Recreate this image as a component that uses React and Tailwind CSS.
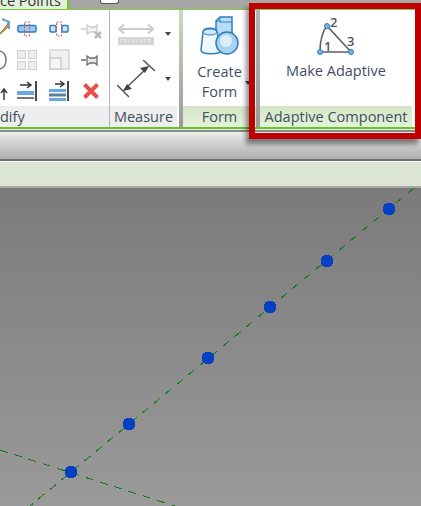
import React from "react";

function Label({ children, green, className = "" }) {
  return (
    <div className={`h-[21px] pt-[2px] flex items-center justify-center text-[14.5px] leading-none text-[#3f4f5f] ${green ? "bg-gradient-to-b from-[#d4e6c6] to-[#e4f3da]" : "bg-[#eeeeee]"} ${className}`}>
      {children}
    </div>
  );
}

function Caret({ className = "" }) {
  return <div className={`w-0 h-0 border-x-[3px] border-x-transparent border-t-[4px] border-t-[#444444] ${className}`} />;
}

function SplitIcon({ split }) {
  return (
    <svg width="20" height="20" viewBox="0 0 20 20" fill="none">
      {split ? (
        <>
          <rect x="1" y="6.5" width="6" height="6.5" rx="1" fill="#cfe3f5" stroke="#2a7fc4" strokeWidth="1.5" />
          <rect x="13" y="6.5" width="6" height="6.5" rx="1" fill="#cfe3f5" stroke="#2a7fc4" strokeWidth="1.5" />
        </>
      ) : (
        <rect x="1" y="6.5" width="18" height="6.5" rx="1.5" fill="#9cc8ec" stroke="#2a7fc4" strokeWidth="1.5" />
      )}
      <rect x="7.5" y="3" width="5" height="14" fill="none" stroke="#e0504a" strokeWidth="1" strokeDasharray="2 1.5" />
    </svg>
  );
}

function PinIcon({ faded, x }) {
  const c = faded ? "#cccccc" : "#6f6f6f";
  return (
    <svg width="22" height="22" viewBox="0 0 22 22" fill="none">
      <path d="M1 11h5M7 7l3 2h5l2-2v9l-2-2h-5l-3 2z" stroke={c} strokeWidth="1.3" fill={faded ? "#f2f2f2" : "#e8e8e8"} />
      {x && <path d="M15 14l6 6M21 14l-6 6" stroke="#b9b9b9" strokeWidth="2.5" />}
    </svg>
  );
}

function ModifyGrid() {
  const cell = "w-[32px] h-[31px] flex items-center justify-center";
  return (
    <div className="grid grid-cols-[11px_32px_32px_32px] pt-[3px] h-[96px] auto-rows-[31px]">
      <div className="h-[31px] flex items-center overflow-hidden">
        <svg width="11" height="22" viewBox="0 0 11 22" fill="none">
          <path d="M-2 18L7 7l2-4-1 6z" fill="#e8a830" stroke="#8b6f3a" />
          <path d="M2 1l7 3v7" stroke="#6f9fd0" strokeWidth="2" />
        </svg>
      </div>
      <div className={cell}><SplitIcon /></div>
      <div className={cell}><SplitIcon split /></div>
      <div className={cell}><PinIcon faded x /></div>

      <div className="h-[31px] flex items-center overflow-hidden">
        <svg width="11" height="22" viewBox="0 0 11 22" fill="none">
          <path d="M0 2c3 1 6 4 6 9s-3 8-6 9" stroke="#777777" strokeWidth="1.5" />
        </svg>
      </div>
      <div className={cell}>
        <div className="grid grid-cols-2 gap-[2px]">
          <div className="w-[9px] h-[9px] bg-[#ececec] border border-[#d2d2d2]" />
          <div className="w-[9px] h-[9px] bg-[#ececec] border border-[#d2d2d2]" />
          <div className="w-[9px] h-[9px] bg-[#ececec] border border-[#d2d2d2]" />
          <div className="w-[9px] h-[9px] bg-[#ececec] border border-[#d2d2d2]" />
        </div>
      </div>
      <div className={cell}>
        <svg width="21" height="21" viewBox="0 0 21 21" fill="none">
          <rect x="1" y="1" width="19" height="19" fill="#f0f0f0" stroke="#d4d4d4" strokeWidth="1.5" />
          <rect x="1" y="9" width="11" height="11" fill="#f6f6f6" stroke="#cccccc" strokeWidth="1.5" />
        </svg>
      </div>
      <div className={cell}><PinIcon /></div>

      <div className="h-[31px] flex items-center overflow-hidden">
        <svg width="11" height="22" viewBox="0 0 11 22" fill="none">
          <path d="M4 20V10M1 13l3-4 3 4" stroke="#3a3a3a" strokeWidth="1.5" />
        </svg>
      </div>
      <div className={cell}>
        <svg width="22" height="22" viewBox="0 0 22 22" fill="none">
          <path d="M4 5h10M11 2l4 3-4 3" stroke="#333333" strokeWidth="1.5" />
          <rect x="1" y="11" width="17" height="4" fill="#67a9e0" />
          <rect x="1" y="17" width="17" height="2" fill="#777777" />
          <path d="M20 1v20" stroke="#4a4a4a" strokeWidth="2" />
        </svg>
      </div>
      <div className={cell}>
        <svg width="22" height="22" viewBox="0 0 22 22" fill="none">
          <path d="M7 4h8M12 1l4 3-4 3" stroke="#333333" strokeWidth="1.5" />
          <rect x="1" y="9" width="17" height="3" fill="#67a9e0" />
          <rect x="1" y="13.5" width="17" height="3" fill="#5a7f9f" />
          <rect x="1" y="18" width="17" height="3" fill="#67a9e0" />
          <path d="M20 1v20" stroke="#4a4a4a" strokeWidth="2" />
        </svg>
      </div>
      <div className={cell}>
        <svg width="18" height="18" viewBox="0 0 18 18" fill="none">
          <path d="M2.5 2.5l13 13M15.5 2.5l-13 13" stroke="#e5504c" strokeWidth="4" />
        </svg>
      </div>
    </div>
  );
}

function MeasureIcons() {
  return (
    <div className="h-[96px] pt-[13px] flex flex-col items-start pl-[7px] gap-[13px]">
      <div className="flex items-start">
        <svg width="38" height="24" viewBox="0 0 38 24" fill="none">
          <path d="M2 6h34M7 1.5L2 6l5 4.5M31 1.5L36 6l-5 4.5" stroke="#cccccc" strokeWidth="2" />
          <rect x="1" y="14" width="36" height="8" fill="#d6d6d6" />
          <path d="M4 16v3M8 16v3M12 16v3M16 16v3M20 16v3M24 16v3M28 16v3M32 16v3" stroke="#efefef" />
        </svg>
        <Caret className="ml-[10px] mt-[9px]" />
      </div>
      <div className="flex items-start">
        <svg width="38" height="38" viewBox="0 0 38 38" fill="none">
          <path d="M26 0l12 11M0 25l12 12" stroke="#555555" strokeWidth="1.5" />
          <path d="M7 30L31 7" stroke="#555555" strokeWidth="1.5" />
          <path d="M32 6l-9 2 5 5zM6 31l9-2-5-5z" fill="#444444" />
        </svg>
        <Caret className="ml-[10px] mt-[17px]" />
      </div>
    </div>
  );
}

function FormIcon() {
  return (
    <svg width="39" height="39" viewBox="0 0 39 39" fill="none">
      <path d="M16 5l4-4h12v21H16z" fill="#b7dcf5" stroke="#2d7fc2" strokeWidth="1.5" />
      <path d="M20 1v5h12M16 5h4" stroke="#2d7fc2" strokeWidth="1" />
      <path d="M3 16c0-5 14-5 14 0l4 18c0 5-20 5-20 0z" fill="#f1f8fd" stroke="#2d7fc2" strokeWidth="1.5" />
      <ellipse cx="10" cy="16" rx="7" ry="3" fill="#cfe6f7" stroke="#2d7fc2" />
      <circle cx="27" cy="27" r="11" fill="#a7d3ee" stroke="#2d7fc2" strokeWidth="1.5" />
      <circle cx="26" cy="25" r="6" fill="#d8eefb" />
    </svg>
  );
}

function AdaptiveIcon() {
  return (
    <svg width="46" height="44" viewBox="0 0 46 44" fill="none">
      <path d="M14 12C9 18 7 27 7 38H38L14 12Z" stroke="#606060" strokeWidth="1.6" />
      <circle cx="14" cy="12" r="2.5" fill="#7fb4e2" stroke="#2d7fc2" />
      <circle cx="7" cy="38" r="2.5" fill="#7fb4e2" stroke="#2d7fc2" />
      <circle cx="38" cy="38" r="2.5" fill="#7fb4e2" stroke="#2d7fc2" />
      <text x="17" y="13" fontSize="13" fontWeight="600" fill="#555555" fontFamily="Open Sans, sans-serif">2</text>
      <text x="11" y="37" fontSize="13" fontWeight="600" fill="#555555" fontFamily="Open Sans, sans-serif">1</text>
      <text x="34" y="32" fontSize="13" fontWeight="600" fill="#555555" fontFamily="Open Sans, sans-serif">3</text>
    </svg>
  );
}

function Canvas() {
  const points = [
    [389, 209],
    [327, 261],
    [270, 307],
    [208, 358],
    [129, 424],
    [71, 472],
  ];
  return (
    <svg width="421" height="318" viewBox="0 188 421 318" className="block w-full h-[318px]" fill="none">
      <path d="M414 188L30 506" stroke="#0d7a12" strokeDasharray="8 7" shapeRendering="crispEdges" />
      <path d="M0 450L175 506" stroke="#0d7a12" strokeDasharray="8 7" shapeRendering="crispEdges" />
      {points.map(([x, y]) => (
        <circle key={x} cx={x} cy={y} r="6.5" fill="#0540c4" shapeRendering="crispEdges" />
      ))}
    </svg>
  );
}

export default function App() {
  return (
    <div className="relative w-[421px] h-[506px] overflow-hidden bg-white font-['Open_Sans','Noto_Sans',sans-serif]">
      {/* top tab strip */}
      <div className="h-[9px] bg-[#a6a6a6] flex overflow-hidden">
        <div className="w-[69px] h-[9px] bg-[#e2f1d8] border-r-2 border-[#6cc52a] overflow-hidden text-[14.5px] leading-none text-[#333333]">
          <div className="-mt-[6px] whitespace-nowrap text-right pr-[9px]">ce Points</div>
        </div>
        <div className="ml-[31px] w-[19px] h-[4px] bg-white border-b border-x border-[#555555] rounded-b-[3px]" />
      </div>

      {/* ribbon */}
      <div className="h-[120px] flex bg-white border-b-2 border-[#66c522] border-t border-t-[#7ccf3a]">
        <div className="w-[110px] flex flex-col border-r border-[#b5b5b5]">
          <ModifyGrid />
          <Label className="justify-start mt-auto">dify</Label>
        </div>
        <div className="w-[69px] flex flex-col">
          <MeasureIcons />
          <Label className="mt-auto mr-[2px]">Measure</Label>
        </div>
        <div className="w-[4px] bg-gradient-to-b from-[#c9dcbd] to-[#999999]" />
        <div className="w-[73px] flex flex-col relative">
          <div className="h-[96px] flex flex-col items-center pt-[6px]">
            <FormIcon />
            <div className="text-[14.5px] leading-[20px] text-[#3f4f5f] text-center mt-[7px]">Create<br />Form</div>
          </div>
          <Caret className="absolute left-[62px] top-[71px]" />
          <Label green className="mt-auto">Form</Label>
        </div>
        <div className="w-[4px] bg-gradient-to-b from-[#b5b5b5] to-[#9a9a9a]" />
        <div className="w-[152px] flex flex-col">
          <div className="h-[96px] flex flex-col items-center pt-[4px]">
            <AdaptiveIcon />
            <div className="text-[14.5px] leading-[20px] text-[#3f4f5f] text-center mt-[3px] whitespace-nowrap">Make Adaptive</div>
          </div>
          <Label green className="mt-auto whitespace-nowrap">Adaptive Component</Label>
        </div>
      </div>

      {/* bar under ribbon */}
      <div className="h-[1px] bg-[#e8e8e8]" />
      <div className="h-[29px] bg-gradient-to-b from-[#ececec] to-[#adadad] border-t-2 border-[#8a8a8a]" />
      <div className="h-[2px] bg-[#6f6f6f]" />
      <div className="h-[27px] bg-[#dce5d4] border-t border-white border-b-2 border-b-[#a9a9a9]" />

      {/* canvas */}
      <div className="bg-gradient-to-b from-[#7b7b7b] to-[#9a9a9a]">
        <Canvas />
      </div>

      {/* red highlight box */}
      <div className="absolute left-[249px] top-[3px] w-[172px] h-[136px] border-[6px] border-[#c00000] shadow-[-3px_5px_5px_rgba(0,0,0,0.45)]" />
    </div>
  );
}
